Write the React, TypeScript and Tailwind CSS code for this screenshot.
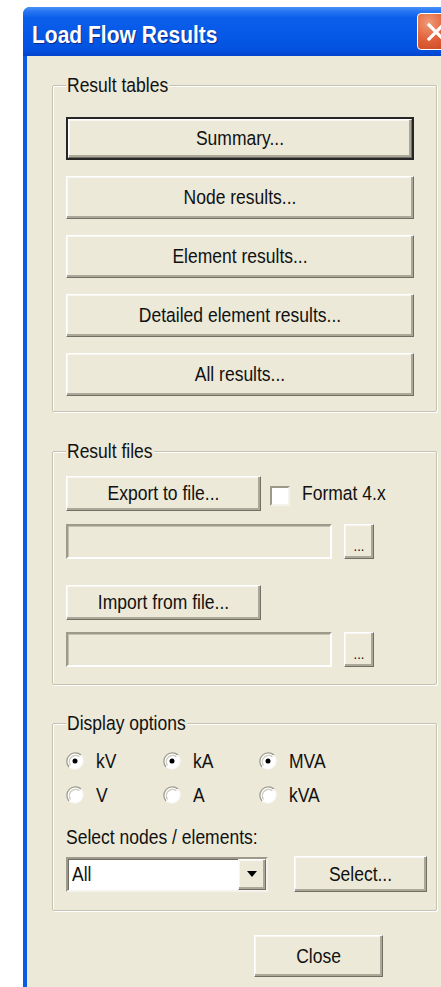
import React from "react";

const raised =
  "bg-[#ECE9D8] border border-t-white border-l-white border-r-[#716F64] border-b-[#716F64] shadow-[inset_-2px_-2px_0_#ACA899,inset_1px_1px_0_#F7F6F0]";

// Dialog text is drawn slightly taller than it is wide.
function T({ children, className = "" }: { children: React.ReactNode; className?: string }) {
  return <span className={`inline-block scale-y-[1.17] ${className}`}>{children}</span>;
}

function Btn({
  label,
  className = "",
  isDefault = false,
}: {
  label: string;
  className?: string;
  isDefault?: boolean;
}) {
  if (isDefault) {
    return (
      <div className={`border-2 border-[#262626] ${className}`}>
        <div className={`${raised} h-full flex items-center justify-center`}>
          <T>{label}</T>
        </div>
      </div>
    );
  }
  return (
    <div className={`${raised} flex items-center justify-center ${className}`}>
      <T>{label}</T>
    </div>
  );
}

function Group({
  title,
  className = "",
  children,
}: {
  title: string;
  className?: string;
  children: React.ReactNode;
}) {
  return (
    <fieldset
      className={`w-[385px] border border-[#C5C2B2] rounded-[2px] shadow-[inset_1px_1px_0_#FFFFFF,1px_1px_0_#FFFFFF] pl-[13px] ${className}`}
    >
      <legend className="ml-0 px-[1px] leading-[20px] bg-[#ECE9D8]">
        <T>{title}</T>
      </legend>
      {children}
    </fieldset>
  );
}

function SunkenField() {
  return (
    <div className="w-[266px] h-[35px] border-2 border-t-[#9D9A8C] border-l-[#9D9A8C] border-r-white border-b-white bg-[#ECE9D8] shadow-[inset_1px_1px_0_#C4C1B2]" />
  );
}

function Radio({ checked, label }: { checked: boolean; label: string }) {
  return (
    <div className="flex items-center gap-[12px]">
      <svg width="18" height="18" viewBox="0 0 18 18">
        <circle cx="9" cy="9" r="8.5" fill="#FFFFFF" />
        <path d="M3 15 A8.5 8.5 0 0 1 15 3" fill="none" stroke="#9C9A8C" strokeWidth="1.3" />
        <path d="M4.6 13.4 A6.3 6.3 0 0 1 13.4 4.6" fill="none" stroke="#CFCDC1" strokeWidth="1.4" />
        <path d="M15 3 A8.5 8.5 0 0 1 3 15" fill="none" stroke="#F6F5F0" strokeWidth="1" />
        {checked && <circle cx="9" cy="9" r="2.5" fill="#000000" />}
      </svg>
      <T>{label}</T>
    </div>
  );
}

export default function App() {
  return (
    <div className="w-[441px] h-[987px] overflow-hidden bg-white pt-[7px] pl-[23px] font-['Liberation_Sans',Arial,sans-serif] text-[17.5px] text-[#111111]">
      <div className="w-[436px] h-[980px] flex flex-col rounded-tl-[7px] overflow-hidden bg-[#0A5BE6]">
        {/* title bar */}
        <div className="h-[49px] shrink-0 flex items-start pl-[9px] bg-[linear-gradient(180deg,#4A92F8_0%,#2A78F2_8%,#0A5FEA_22%,#0558E6_60%,#0451DF_88%,#0344CC_100%)]">
          <span className="mt-[16px] inline-block scale-y-[1.12] font-bold text-[21px] leading-[24px] text-white [text-shadow:1px_1px_0_#0B2A8A]">
            Load Flow Results
          </span>
          <div className="ml-auto mt-[6px] mr-[5px] w-[37px] h-[37px] rounded-[4px] border border-white bg-[radial-gradient(circle_at_30%_25%,#F09A78_0%,#E2643C_45%,#C53F1C_100%)] flex items-center justify-center">
            <svg width="22" height="22" viewBox="0 0 22 22">
              <path d="M4 4 L18 18 M18 4 L4 18" stroke="#FFFFFF" strokeWidth="3.2" strokeLinecap="square" />
            </svg>
          </div>
        </div>

        {/* client area */}
        <div className="flex-1 ml-[4px] mr-[4px] bg-[#ECE9D8] pl-[25px] pt-[19px] flex flex-col">
          <Group title="Result tables" className="pr-[22px] pt-[22px] pb-[15px]">
            <div className="flex flex-col gap-[16px]">
              <Btn label="Summary..." isDefault className="h-[43px]" />
              <Btn label="Node results..." className="h-[43px]" />
              <Btn label="Element results..." className="h-[43px]" />
              <Btn label="Detailed element results..." className="h-[43px]" />
              <Btn label="All results..." className="h-[43px]" />
            </div>
          </Group>

          <Group title="Result files" className="pr-[22px] mt-[29px] pt-[15px] pb-[17px]">
            <div className="flex items-center">
              <Btn label="Export to file..." className="w-[195px] h-[35px]" />
              <div className="ml-[9px] mt-[4px] w-[20px] h-[20px] bg-white border-2 border-t-[#9D9A8C] border-l-[#9D9A8C] border-r-[#F4F3EE] border-b-[#F4F3EE]" />
              <T className="ml-[12px]">Format 4.x</T>
            </div>
            <div className="mt-[13px] flex items-center gap-[12px]">
              <SunkenField />
              <Btn label="..." className="w-[30px] h-[35px] text-[13px] leading-none pt-[8px]" />
            </div>
            <Btn label="Import from file..." className="mt-[26px] w-[195px] h-[35px]" />
            <div className="mt-[12px] flex items-center gap-[12px]">
              <SunkenField />
              <Btn label="..." className="w-[30px] h-[35px] text-[13px] leading-none pt-[8px]" />
            </div>
          </Group>

          <Group title="Display options" className="pr-[9px] mt-[28px] pt-[11px] pb-[18px]">
            <div className="grid grid-cols-[97px_96px_1fr]">
              <div className="h-[34px] flex items-center"><Radio checked label="kV" /></div>
              <div className="h-[34px] flex items-center"><Radio checked label="kA" /></div>
              <div className="h-[34px] flex items-center"><Radio checked label="MVA" /></div>
              <div className="h-[34px] flex items-center"><Radio checked={false} label="V" /></div>
              <div className="h-[34px] flex items-center"><Radio checked={false} label="A" /></div>
              <div className="h-[34px] flex items-center"><Radio checked={false} label="kVA" /></div>
            </div>
            <div className="mt-[15px] leading-[20px]">
              <T>Select nodes / elements:</T>
            </div>
            <div className="mt-[9px] flex items-center gap-[26px]">
              <div className="w-[202px] h-[35px] bg-white border-2 border-t-[#9D9A8C] border-l-[#9D9A8C] border-r-[#F4F3EE] border-b-[#F4F3EE] flex">
                <div className="flex-1 flex items-center pl-[4px] shadow-[inset_1px_1px_0_#6F6D62]">
                  <T>All</T>
                </div>
                <div className={`${raised} w-[28px] flex items-center justify-center`}>
                  <svg width="12" height="8" viewBox="0 0 12 8">
                    <path d="M1 1 H11 L6 7 Z" fill="#000000" />
                  </svg>
                </div>
              </div>
              <Btn label="Select..." className="w-[133px] h-[36px]" />
            </div>
          </Group>

          <div className="w-[385px] mt-[24px] flex justify-end pr-[54px]">
            <Btn label="Close" className="w-[129px] h-[42px]" />
          </div>
        </div>
      </div>
    </div>
  );
}
